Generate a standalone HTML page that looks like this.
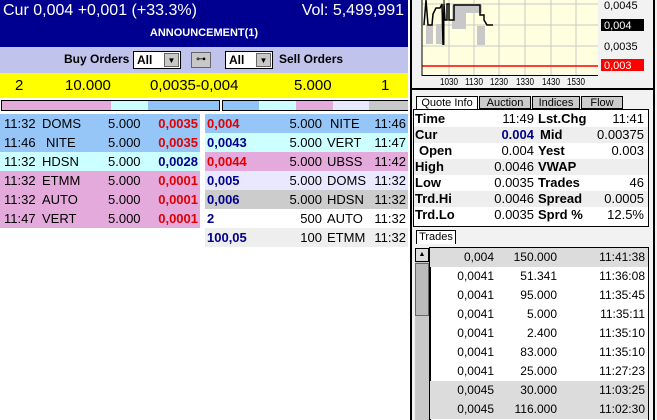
<!DOCTYPE html>
<html><head><meta charset="utf-8"><style>
*{margin:0;padding:0;box-sizing:border-box}
body{width:657px;height:420px;overflow:hidden;background:#fff;font-family:"Liberation Sans",Arial,sans-serif;position:relative}
.a{position:absolute;white-space:nowrap}
.r{position:absolute;height:19px;font-size:13px;line-height:19px}
.r span{position:absolute}
.b{font-weight:bold}
.red{color:#e00000}.blu{color:#00008b}
.q{position:absolute;left:414px;width:234px;height:16px;font-size:13px;line-height:16px}
.q span{position:absolute}
.t{position:absolute;left:430px;width:218px;height:19px;font-size:12px;line-height:19px}
.t span{position:absolute;text-align:right}
.tab{position:absolute;top:96px;height:13px;border:1px solid #000;font-size:11px;text-align:center;line-height:12px}
</style></head><body>
<div class="a" style="left:0;top:0;width:408px;height:47px;background:#000090"></div>
<div class="a" style="left:3px;top:2px;color:#fff;font-size:16px">Cur 0,004 +0,001 (+33.3%)</div>
<div class="a" style="right:253px;top:2px;color:#fff;font-size:16px">Vol: 5,499,991</div>
<div class="a" style="left:0;width:408px;top:27px;text-align:center;color:#fff;font-size:11px;font-weight:bold">ANNOUNCEMENT(1)</div>
<div class="a" style="left:0;top:47px;width:408px;height:26px;background:#c0c4ec"></div>
<div class="a" style="left:64px;top:52px;font-size:12px;font-weight:bold">Buy Orders</div>
<div class="a" style="left:133px;top:51px;width:48px;height:18px;background:#fff;border:1px solid #000;font-size:12px;font-weight:bold;padding-left:3px;line-height:16px">All<span style="position:absolute;right:1px;top:1px;width:15px;height:14px;background:#c8c8c8;border:1px solid #666;font-size:8px;text-align:center;line-height:13px">▼</span></div>
<div class="a" style="left:191px;top:52px;width:20px;height:16px;background:#c8c8c8;border:1px solid #666;font-size:10px;text-align:center;line-height:14px">⊶</div>
<div class="a" style="left:225px;top:51px;width:48px;height:18px;background:#fff;border:1px solid #000;font-size:12px;font-weight:bold;padding-left:3px;line-height:16px">All<span style="position:absolute;right:1px;top:1px;width:15px;height:14px;background:#c8c8c8;border:1px solid #666;font-size:8px;text-align:center;line-height:13px">▼</span></div>
<div class="a" style="left:279px;top:52px;font-size:12px;font-weight:bold">Sell Orders</div>
<div class="a" style="left:0;top:73px;width:408px;height:25px;background:#ffff00;font-size:15px;line-height:25px">
<span class="a" style="left:15px">2</span><span class="a" style="left:65px">10.000</span><span class="a" style="left:150px">0,0035-0,004</span><span class="a" style="left:294px">5.000</span><span class="a" style="left:381px">1</span></div>
<div class="a" style="left:1px;top:100px;width:219px;height:11px;border:1px solid #000;display:flex">
<div style="width:109px;background:#e4aadc"></div><div style="width:37px;background:#ccffff"></div><div style="flex:1;background:#90c4f8"></div></div>
<div class="a" style="left:222px;top:100px;width:187px;height:11px;border:1px solid #000;display:flex">
<div style="width:36px;background:#90c4f8"></div><div style="width:37px;background:#ccffff"></div><div style="width:37px;background:#e4aadc"></div><div style="width:36px;background:#e8e8ff"></div><div style="flex:1;background:#c8c8c8"></div></div>
<div class="r" style="left:0;top:114px;width:200px;background:#96c6f8"><span style="left:4px">11:32</span><span style="left:42px">DOMS</span><span style="left:108px">5.000</span><span class="b red" style="right:2px">0,0035</span></div>
<div class="r" style="left:0;top:133px;width:200px;background:#96c6f8"><span style="left:4px">11:46</span><span style="left:46px">NITE</span><span style="left:108px">5.000</span><span class="b red" style="right:2px">0,0035</span></div>
<div class="r" style="left:0;top:152px;width:200px;background:#ccffff"><span style="left:4px">11:32</span><span style="left:42px">HDSN</span><span style="left:108px">5.000</span><span class="b blu" style="right:2px">0,0028</span></div>
<div class="r" style="left:0;top:171px;width:200px;background:#e4aadc"><span style="left:4px">11:32</span><span style="left:42px">ETMM</span><span style="left:108px">5.000</span><span class="b red" style="right:2px">0,0001</span></div>
<div class="r" style="left:0;top:190px;width:200px;background:#e4aadc"><span style="left:4px">11:32</span><span style="left:42px">AUTO</span><span style="left:108px">5.000</span><span class="b red" style="right:2px">0,0001</span></div>
<div class="r" style="left:0;top:209px;width:200px;background:#e4aadc"><span style="left:4px">11:47</span><span style="left:42px">VERT</span><span style="left:108px">5.000</span><span class="b red" style="right:2px">0,0001</span></div>
<div class="r" style="left:205px;top:114px;width:203px;background:#96c6f8"><span class="b red" style="left:2px">0,004</span><span style="right:86px">5.000</span><span style="left:125px">NITE</span><span style="right:2px">11:46</span></div>
<div class="r" style="left:205px;top:133px;width:203px;background:#ccffff"><span class="b blu" style="left:2px">0,0043</span><span style="right:86px">5.000</span><span style="left:122px">VERT</span><span style="right:2px">11:47</span></div>
<div class="r" style="left:205px;top:152px;width:203px;background:#e4aadc"><span class="b red" style="left:2px">0,0044</span><span style="right:86px">5.000</span><span style="left:122px">UBSS</span><span style="right:2px">11:42</span></div>
<div class="r" style="left:205px;top:171px;width:203px;background:#e8e8ff"><span class="b blu" style="left:2px">0,005</span><span style="right:86px">5.000</span><span style="left:122px">DOMS</span><span style="right:2px">11:32</span></div>
<div class="r" style="left:205px;top:190px;width:203px;background:#cccccc"><span class="b blu" style="left:2px">0,006</span><span style="right:86px">5.000</span><span style="left:122px">HDSN</span><span style="right:2px">11:32</span></div>
<div class="r" style="left:205px;top:209px;width:203px;background:#fff"><span class="b blu" style="left:2px">2</span><span style="right:86px">500</span><span style="left:122px">AUTO</span><span style="right:2px">11:32</span></div>
<div class="r" style="left:205px;top:228px;width:203px;background:#eeeeee"><span class="b blu" style="left:2px">100,05</span><span style="right:86px">100</span><span style="left:122px">ETMM</span><span style="right:2px">11:32</span></div>
<div class="a" style="left:408px;top:0;width:249px;height:420px;background:#f2f2f2;border-left:2px solid #fff"></div>
<div class="a" style="left:410px;top:0;width:2px;height:420px;background:#000"></div>
<div class="a" style="left:653px;top:0;width:2px;height:420px;background:#000"></div>
<div class="a" style="left:412px;top:88px;width:241px;height:2px;background:#000"></div>
<svg class="a" style="left:412px;top:0" width="241" height="88">
<rect x="10" y="0" width="176" height="75" fill="#ffffe0"/>
<g stroke="#c8c8c8" stroke-width="1">
<line x1="37" y1="0" x2="37" y2="75"/><line x1="62" y1="0" x2="62" y2="75"/><line x1="87" y1="0" x2="87" y2="75"/><line x1="113" y1="0" x2="113" y2="75"/><line x1="139" y1="0" x2="139" y2="75"/><line x1="164" y1="0" x2="164" y2="75"/>
<line x1="10" y1="4" x2="186" y2="4"/><line x1="10" y1="25" x2="186" y2="25"/><line x1="10" y1="46" x2="186" y2="46"/></g>
<g fill="#c8c8c8"><rect x="14" y="25" width="7" height="19"/><rect x="24" y="24" width="8" height="20"/><rect x="40" y="5" width="14" height="24"/><rect x="54" y="5" width="16" height="8"/><rect x="65" y="26" width="8" height="19"/></g>
<polyline fill="none" stroke="#000" stroke-width="1.5" points="12,25 14,0 16,25 20,25 21,14 24,8 28,8 30,4 31,45 32,4 33,20 35,20 35,4 37,4 37,20 42,20 42,5 68,5 68,15 72,15 72,20 75,25 81,25"/>
<line x1="32" y1="0" x2="32" y2="45" stroke="#000" stroke-width="1"/>
<line x1="10" y1="66" x2="186" y2="66" stroke="#f00" stroke-width="1.5"/>
<line x1="10" y1="0" x2="10" y2="76" stroke="#000"/><line x1="10" y1="75.5" x2="186" y2="75.5" stroke="#000"/>
<g font-size="10" font-family="Liberation Sans" text-anchor="middle"><text x="37" y="85" textLength="18" lengthAdjust="spacingAndGlyphs">1030</text><text x="62" y="85" textLength="18" lengthAdjust="spacingAndGlyphs">1130</text><text x="87" y="85" textLength="18" lengthAdjust="spacingAndGlyphs">1230</text><text x="113" y="85" textLength="18" lengthAdjust="spacingAndGlyphs">1330</text><text x="139" y="85" textLength="18" lengthAdjust="spacingAndGlyphs">1430</text><text x="164" y="85" textLength="18" lengthAdjust="spacingAndGlyphs">1530</text></g>
<rect x="189" y="19" width="43" height="12" fill="#000"/><rect x="189" y="59" width="43" height="12" fill="#f00"/>
<g font-size="11" font-family="Liberation Sans"><text x="192" y="9">0,0045</text><text x="192" y="29" fill="#fff">0,004</text><text x="192" y="50">0,0035</text><text x="192" y="69" fill="#fff">0,003</text></g>
</svg>
<div class="tab" style="left:416px;width:62px;background:#fff;border-bottom:none">Quote Info</div>
<div class="tab" style="left:479px;width:52px;background:#ccc">Auction</div>
<div class="tab" style="left:532px;width:48px;background:#ccc">Indices</div>
<div class="tab" style="left:581px;width:42px;background:#ccc">Flow</div>
<div class="a" style="left:413px;top:109px;width:236px;height:118px;background:#fff;border:1px solid #000"></div>
<div class="q" style="top:111px"><span class="b" style="left:1px">Time</span><span style="right:114px">11:49</span><span class="b" style="left:124px">Lst.Chg</span><span style="right:4px">11:41</span></div>
<div class="q" style="top:127px;background:#eee"><span class="b" style="left:1px">Cur</span><span class="b blu" style="right:114px">0.004</span><span class="b" style="left:126px">Mid</span><span style="right:4px">0.00375</span></div>
<div class="q" style="top:143px"><span class="b" style="left:5px">Open</span><span style="right:114px">0.004</span><span class="b" style="left:124px">Yest</span><span style="right:4px">0.003</span></div>
<div class="q" style="top:159px;background:#eee"><span class="b" style="left:1px">High</span><span style="right:114px">0.0046</span><span class="b" style="left:124px">VWAP</span></div>
<div class="q" style="top:175px"><span class="b" style="left:1px">Low</span><span style="right:114px">0.0035</span><span class="b" style="left:124px">Trades</span><span style="right:4px">46</span></div>
<div class="q" style="top:191px;background:#eee"><span class="b" style="left:1px">Trd.Hi</span><span style="right:114px">0.0046</span><span class="b" style="left:124px">Spread</span><span style="right:4px">0.0005</span></div>
<div class="q" style="top:207px"><span class="b" style="left:1px">Trd.Lo</span><span style="right:114px">0.0035</span><span class="b" style="left:124px">Sprd %</span><span style="right:4px">12.5%</span></div>
<div class="a" style="left:416px;top:230px;width:40px;height:14px;background:#fff;border:1px solid #000;border-bottom:none;font-size:11px;text-align:center;line-height:13px">Trades</div>
<div class="a" style="left:415px;top:248px;width:14px;height:172px;background:#c8c8c8"></div>
<div class="a" style="left:415px;top:248px;width:14px;height:14px;background:#ddd;border:1px solid #000;font-size:7px;text-align:center;line-height:12px">▲</div>
<div class="a" style="left:415px;top:263px;width:14px;height:53px;background:#bbb;border:1px solid #666"></div>
<div class="a" style="left:429px;top:247px;width:220px;height:173px;background:#fff;border:1px solid #000;border-width:1px 1px 0 2px"></div>
<div class="t" style="top:248px;background:#dcdcdc"><span style="right:154px">0,004</span><span style="right:91px">150.000</span><span style="right:3px">11:41:38</span></div>
<div class="t" style="top:267px"><span style="right:154px">0,0041</span><span style="right:91px">51.341</span><span style="right:3px">11:36:08</span></div>
<div class="t" style="top:286px"><span style="right:154px">0,0041</span><span style="right:91px">95.000</span><span style="right:3px">11:35:45</span></div>
<div class="t" style="top:305px"><span style="right:154px">0,0041</span><span style="right:91px">5.000</span><span style="right:3px">11:35:11</span></div>
<div class="t" style="top:324px"><span style="right:154px">0,0041</span><span style="right:91px">2.400</span><span style="right:3px">11:35:10</span></div>
<div class="t" style="top:343px"><span style="right:154px">0,0041</span><span style="right:91px">83.000</span><span style="right:3px">11:35:10</span></div>
<div class="t" style="top:362px"><span style="right:154px">0,0041</span><span style="right:91px">25.000</span><span style="right:3px">11:27:23</span></div>
<div class="t" style="top:381px;background:#dcdcdc"><span style="right:154px">0,0045</span><span style="right:91px">30.000</span><span style="right:3px">11:03:25</span></div>
<div class="t" style="top:400px;background:#dcdcdc"><span style="right:154px">0,0045</span><span style="right:91px">116.000</span><span style="right:3px">11:02:30</span></div>
</body></html>
